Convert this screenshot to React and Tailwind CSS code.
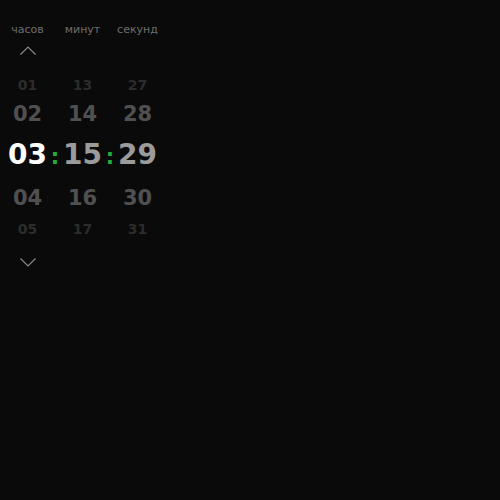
import React from "react";

const hours = ["01", "02", "03", "04", "05"];
const minutes = ["13", "14", "15", "16", "17"];
const seconds = ["27", "28", "29", "30", "31"];

const font = { fontFamily: '"DejaVu Sans", "Noto Sans", sans-serif' };

function Chevron({ down }) {
  return (
    <svg width="16" height="9" viewBox="0 0 16 9" fill="none" stroke="#8a8a8a" strokeWidth="1.2">
      {down ? <polyline points="0.5,0.5 8,8 15.5,0.5" /> : <polyline points="0.5,8.5 8,1 15.5,8.5" />}
    </svg>
  );
}

function Row({ values, className, cellClass }) {
  return (
    <div className={"flex items-center " + className}>
      {values.map((v) => (
        <div key={v} className={"w-[55px] text-center font-bold leading-none " + cellClass}>
          {v}
        </div>
      ))}
    </div>
  );
}

export default function App() {
  return (
    <div className="min-h-[500px] w-full bg-[#0a0a0a]" style={font}>
      <div className="flex w-[165px] flex-col pt-[22px]">
        <div className="flex h-[14px] items-center text-[11px] leading-none text-[#6e6e6e]">
          <div className="w-[55px] text-center">часов</div>
          <div className="w-[55px] text-center">минут</div>
          <div className="w-[55px] text-center">секунд</div>
        </div>

        <div className="mt-[10px] flex h-[9px] w-[55px] justify-center">
          <Chevron />
        </div>

        <div className="mt-[18px]">
          <Row
            values={[hours[0], minutes[0], seconds[0]]}
            className="h-[24px]"
            cellClass="text-[14px] text-[#2c2c2c]"
          />
          <Row
            values={[hours[1], minutes[1], seconds[1]]}
            className="h-[34px]"
            cellClass="text-[21px] text-[#505050]"
          />

          <div className="flex h-[46px] items-baseline pt-[10px] leading-none font-bold">
            <div className="w-[55px] text-center text-[28px] text-white">{hours[2]}</div>
            <div className="flex w-0 justify-center text-[21px] text-[#1fae3f]">:</div>
            <div className="w-[55px] text-center text-[28px] text-[#9b9b9b]">{minutes[2]}</div>
            <div className="flex w-0 justify-center text-[21px] text-[#1fae3f]">:</div>
            <div className="w-[55px] text-center text-[28px] text-[#9b9b9b]">{seconds[2]}</div>
          </div>

          <Row
            values={[hours[3], minutes[3], seconds[3]]}
            className="h-[42px]"
            cellClass="text-[21px] text-[#505050]"
          />
          <Row
            values={[hours[4], minutes[4], seconds[4]]}
            className="h-[20px]"
            cellClass="text-[14px] text-[#2c2c2c]"
          />
        </div>

        <div className="mt-[19px] flex h-[9px] w-[55px] justify-center">
          <Chevron down />
        </div>
      </div>
    </div>
  );
}
